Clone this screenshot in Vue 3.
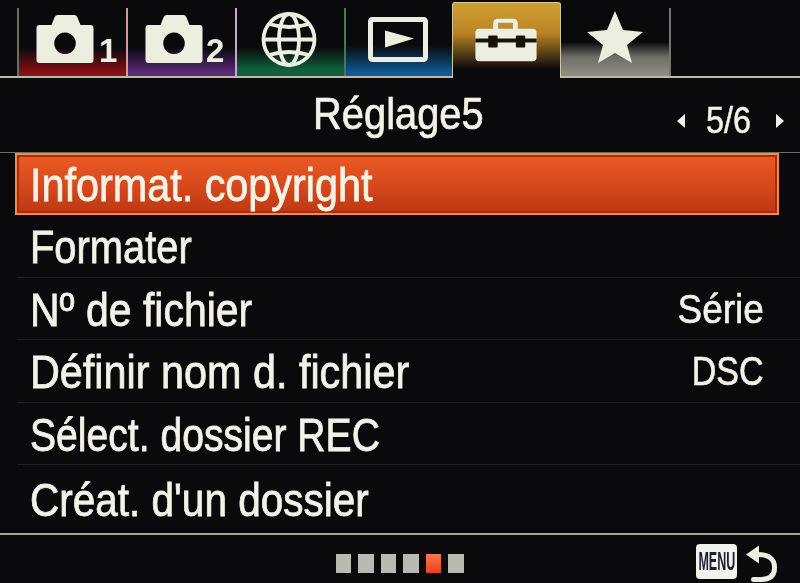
<script setup>
const rows = [
  { label: 'Informat. copyright', selected: true, sx: 0.88 },
  { label: 'Formater', sx: 0.849 },
  { label: 'Nº de fichier', value: 'Série', sx: 0.872 },
  { label: 'Définir nom d. fichier', value: 'DSC', tight: true, sx: 0.88 },
  { label: 'Sélect. dossier REC', sx: 0.832 },
  { label: "Créat. d'un dossier", sx: 0.862 }
]
const dots = [0, 1, 2, 3, 4, 5]
</script>

<template>
  <div class="screen">
    <div class="tabs">
      <div class="tab red">
        <svg viewBox="0 0 109 68" class="ico">
          <path class="ink" fill-rule="evenodd" d="M22 17h12.500l3-7.500q.6-2.500 3-2.500h17q2.400 0 3 2.500l3 7.500h10q3 0 3 3v32q0 3-3 3h-51q-3 0-3-3v-32q0-3 3-3zM48 24.500a10.800 10.800 0 1 0 .01 0z" />
          <text class="digit" x="82" y="54">1</text>
        </svg>
      </div>
      <div class="tab purple">
        <svg viewBox="0 0 109 68" class="ico">
          <path class="ink" fill-rule="evenodd" d="M22 17h12.500l3-7.500q.6-2.500 3-2.500h17q2.400 0 3 2.500l3 7.500h10q3 0 3 3v32q0 3-3 3h-51q-3 0-3-3v-32q0-3 3-3zM48 24.500a10.800 10.800 0 1 0 .01 0z" />
          <text class="digit" x="80" y="54">2</text>
        </svg>
      </div>
      <div class="tab green">
        <svg viewBox="0 0 109 68" class="ico">
          <g class="line" stroke-width="3.800">
            <circle cx="54" cy="31.500" r="25.500" />
            <ellipse cx="54" cy="31.500" rx="10" ry="25.500" />
            <path d="M28.500 31.500h51M34 16q20 6 40 0M34 47q20-6 40 0" />
          </g>
        </svg>
      </div>
      <div class="tab blue">
        <svg viewBox="0 0 109 68" class="ico">
          <rect class="line" x="26.500" y="11.500" width="55" height="40" rx="2" stroke-width="5" />
          <path class="ink" d="M41 22.500l29 8-29 9z" />
        </svg>
      </div>
      <div class="tab active">
        <svg viewBox="0 0 109 76" class="ico wide">
          <path class="ink" fill-rule="evenodd" d="M41 26v-5q0-5 5-5h15q5 0 5 5v5h15q4 0 4 4v25q0 4-4 4h-54q-4 0-4-4v-25q0-4 4-4zM46 20v6h15v-6z" />
          <rect class="gap" x="23" y="36" width="62" height="4" />
          <rect class="gap" x="36" y="33" width="9.500" height="12" rx="1" />
          <rect class="gap" x="64" y="33" width="9.500" height="12" rx="1" />
        </svg>
      </div>
      <div class="tab grey">
        <svg viewBox="0 0 108 68" class="ico flat">
          <path class="ink" d="M54 3l8 19 20 2-16 13 5 18-17-10-17 10 5-18-16-13 20-2z" />
        </svg>
      </div>
      <div class="tab end"></div>
    </div>

    <div class="title-row">
      <span class="title">Réglage5</span>
      <div class="pager">
        <i class="arrow left"></i>
        <span class="pages">5/6</span>
        <i class="arrow right"></i>
      </div>
    </div>

    <ul class="list">
      <li v-for="r in rows" :key="r.label" class="row" :class="{ selected: r.selected }">
        <span class="label" :style="{ transform: `scaleX(${r.sx})` }">{{ r.label }}</span>
        <span v-if="r.value" class="value" :class="{ tight: r.tight }">{{ r.value }}</span>
      </li>
    </ul>

    <div class="footer">
      <div class="dots">
        <i v-for="d in dots" :key="d" class="dot" :class="{ on: d === 4 }"></i>
      </div>
      <div class="back">
        <span class="menu"><span class="menu-text">MENU</span></span>
        <svg viewBox="0 0 34 40" class="ret">
          <path class="ink" d="M1 10.500L14 1.500v18z" />
          <path class="line" stroke-width="5" stroke-linecap="round" d="M12 10.500q18 0 17.500 13.500q0 11-13 11.500h-8" />
        </svg>
      </div>
    </div>
  </div>
</template>

<style>
html, body { margin: 0; background: #0a0a0d; }
</style>

<style scoped>
.screen {
  width: 800px;
  height: 583px;
  overflow: hidden;
  background: #0a0a0d;
  color: #f2f3e6;
  font-family: "Liberation Sans", Arial, sans-serif;
  display: flex;
  flex-direction: column;
  filter: blur(0.45px);
}
.tabs {
  height: 78px;
  box-sizing: border-box;
  padding-left: 17px;
  display: flex;
  align-items: flex-end;
  flex: none;
  border-bottom: 2px solid #b9baae;
}
.tab {
  width: 109px;
  height: 68px;
  box-sizing: border-box;
  border-left: 2px solid #55564f;
  flex: none;
}
.ico { display: block; width: 109px; height: 100%; margin-left: -2px; }
.ico.wide { margin-left: -1px; }
.ico.flat { width: 108px; margin-left: 0; }
.ink { fill: #ecefe0; }
.gap { fill: #17110a; }
.line { fill: none; stroke: #ecefe0; }
.digit { font: bold 33px "Liberation Sans", Arial, sans-serif; fill: #ecefe0; }
.red { background: linear-gradient(#0a0a0d 58%, #8a0f16 96%); border-left-color: #6b6c66; }
.purple { background: linear-gradient(#0a0a0d 58%, #5b2a78 96%); border-left-color: #d49a98; }
.green { background: linear-gradient(#0a0a0d 58%, #0f5f3a 90%); border-left-color: #c5a9c9; }
.blue { background: linear-gradient(#0a0a0d 55%, #0f5b96 96%); border-left-color: #3f7a55; }
.active {
  height: 76px;
  margin-left: -1px;
  margin-bottom: -2px;
  border: 1px solid #cfc9a2;
  border-bottom: none;
  border-radius: 3px 3px 0 0;
  background: linear-gradient(#d09d33 3%, #b98425 40%, #0a0a0d 88%);
}
.grey {
  width: 108px;
  border-left: none;
  background: linear-gradient(#0a0a0d 50%, #6e6e66 72%, #8f8f86 100%);
}
.end {
  width: 2px;
  border-left-color: #77776f;
}
.title-row {
  height: 75px;
  flex: none;
  position: relative;
  display: flex;
  align-items: center;
  justify-content: center;
  border-bottom: 1px solid #6d6e66;
  box-sizing: border-box;
}
.title {
  font-size: 45px;
  line-height: 74px;
  transform: scaleX(0.885);
  margin-left: -4px;
  margin-top: -3px;
  -webkit-text-stroke: 0.7px #f2f3e6;
}
.pager {
  position: absolute;
  left: 677px;
  top: 25px;
  display: flex;
  align-items: center;
  height: 36px;
}
.pages {
  font-size: 36px;
  width: 46px;
  margin: 0 24px 0 21px;
  display: inline-block;
  white-space: nowrap;
  transform: scaleX(0.9);
  transform-origin: left center;
  -webkit-text-stroke: 0.5px #f2f3e6;
}
.arrow { width: 0; height: 0; border-style: solid; display: block; }
.arrow.left { border-width: 7px 8px 7px 0; border-color: transparent #f2f3e6 transparent transparent; }
.arrow.right { border-width: 7px 0 7px 8px; border-color: transparent transparent transparent #f2f3e6; }
.list {
  list-style: none;
  margin: 0;
  padding: 0;
  flex: none;
}
.row {
  height: 62.500px;
  box-sizing: border-box;
  margin-left: 17px;
  padding: 2px 36px 0 13px;
  display: flex;
  align-items: center;
  justify-content: space-between;
  border-bottom: 1px solid #1f1f20;
  font-size: 47px;
  white-space: nowrap;
}
.row:last-child { border-bottom: none; height: 68px; padding-top: 0; }
.row.selected {
  margin: 0 21px 0 15px;
  padding: 1px 15px 0 13px;
  height: 62px;
  border: 2px solid #f08a4e;
  box-shadow: inset 0 0 0 2px #a82d0e;
  background: linear-gradient(#ea5a24 0%, #d84a1c 50%, #bc3813 100%);
}
.label {
  display: inline-block;
  transform-origin: left center;
  -webkit-text-stroke: 0.8px #f2f3e6;
}
.value {
  display: inline-block;
  font-size: 41px;
  transform: scaleX(0.9);
  transform-origin: right center;
  -webkit-text-stroke: 0.6px #f2f3e6;
}
.value.tight { transform: scaleX(0.83); }
.footer {
  border-top: 2px solid #a6a79c;
  flex: 1;
  position: relative;
  display: flex;
  align-items: center;
  justify-content: center;
}
.dots {
  display: flex;
  gap: 7px;
  margin-left: -1px;
  margin-top: 8px;
}
.dot { width: 15.500px; height: 19px; background: #b8b9b0; display: block; }
.dot.on { background: linear-gradient(#f6794a, #ee3f22); }
.back {
  position: absolute;
  left: 696px;
  top: 9px;
  display: flex;
  align-items: flex-start;
  gap: 8px;
}
.menu {
  width: 41px;
  height: 35px;
  background: #f2f3ea;
  border-radius: 4px;
  display: flex;
  align-items: center;
  justify-content: center;
  overflow: hidden;
}
.menu-text {
  color: #1c2030;
  font-size: 25px;
  font-weight: bold;
  display: inline-block;
  transform: scaleX(0.5);
}
.ret { width: 34px; height: 40px; display: block; }
</style>
